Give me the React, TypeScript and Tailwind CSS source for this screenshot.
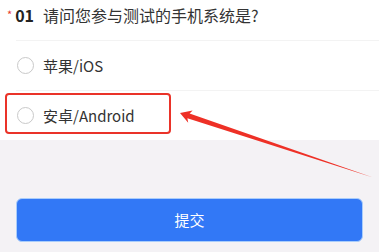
import React from "react";

function Radio() {
  return <span className="block w-[17px] h-[17px] rounded-full border border-[#c9c9c9] bg-white shrink-0" />;
}

export default function App() {
  return (
    <div
      className="relative w-[379px] h-[252px] bg-[#f4f2f5] overflow-hidden"
      style={{ fontFamily: '"Noto Sans CJK SC", "Noto Sans", sans-serif' }}
    >
      <div className="bg-white h-[140px]">
        <div className="h-[30px] flex items-center pl-[7px] text-[16px] leading-none">
          <span className="text-[#e8382c] text-[11px] -mt-[1px] mr-[3px]">*</span>
          <span className="text-[#222] font-semibold mr-[9px]">01</span>
          <span className="text-[#333]">请问您参与测试的手机系统是?</span>
        </div>
        <div className="mt-[10px] ml-[16px] h-px bg-[#f3f3f3]" />
        <div className="h-[49px] flex items-center pl-[17px] gap-[9px]">
          <Radio />
          <span className="text-[15px] text-[#333] leading-none">苹果/iOS</span>
        </div>
        <div className="ml-[16px] h-px bg-[#f3f3f3]" />
        <div className="h-[49px] flex items-center pl-[17px] gap-[9px]">
          <Radio />
          <span className="text-[15px] text-[#333] leading-none">安卓/Android</span>
        </div>
      </div>
      <div className="px-[16px] pt-[58px]">
        <button className="w-full h-[44px] rounded-[6px] bg-[#3278f6] border border-[#a9cdfb] text-white text-[15px] flex items-center justify-center">
          提交
        </button>
      </div>

      <div className="absolute left-[5px] top-[93px] w-[166px] h-[41px] border-2 border-[#ea3329] rounded-[4px]" />
      <svg className="absolute left-0 top-0 pointer-events-none" width="379" height="252" viewBox="0 0 379 252">
        <path
          d="M180,113 L192.6,110.4 L189.6,113.4 L373,177.5 L187.4,118.3 L188.2,122.8 Z"
          fill="#ee3026"
        />
      </svg>
    </div>
  );
}
